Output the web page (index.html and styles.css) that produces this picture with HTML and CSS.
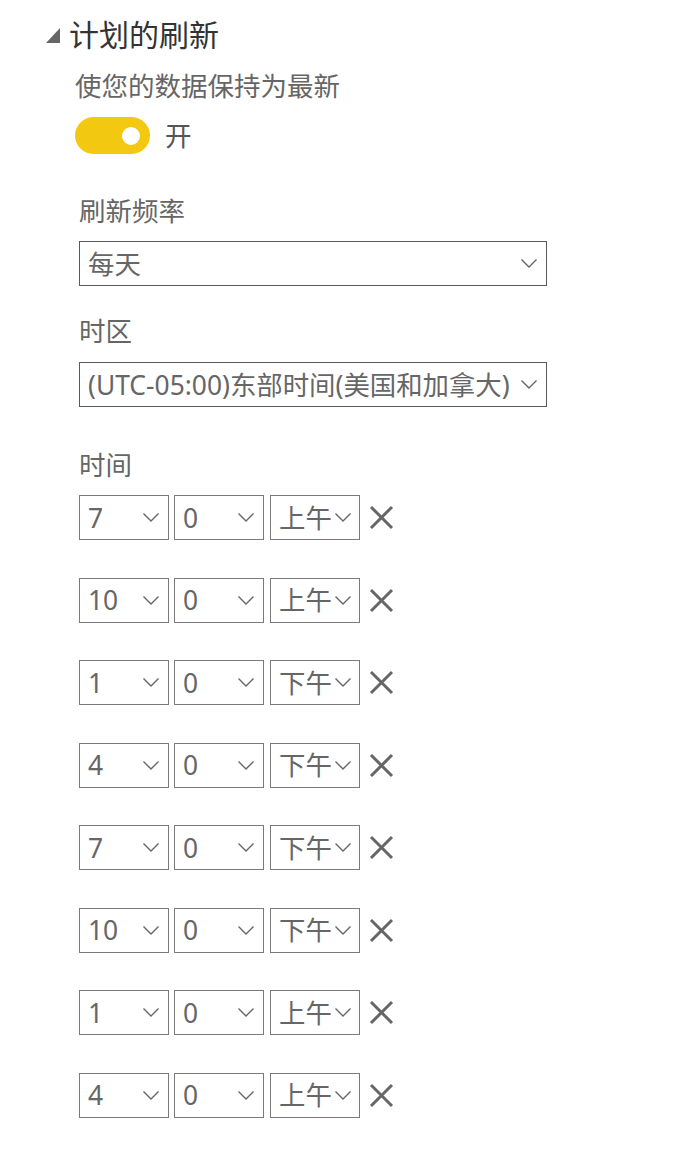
FILE: index.html
```html
<!DOCTYPE html>
<html lang="zh-CN">
<head>
<meta charset="utf-8">
<link rel="stylesheet" href="styles.css">
</head>
<body>
<div class="panel">
  <div class="section-head">
    <svg class="caret" width="15" height="15" viewBox="0 0 15 15"><polygon points="14,0 14,15 0,15" fill="#666"/></svg>
    <h2 class="section-title">计划的刷新</h2>
  </div>
  <div class="section-body">
    <p class="desc">使您的数据保持为最新</p>
    <div class="toggle-row">
      <span class="toggle"><span class="knob"></span></span>
      <span class="toggle-label">开</span>
    </div>

    <div class="field field-freq">
      <div class="label">刷新频率</div>
      <div class="select wide"><span class="value">每天</span><svg class="chev" viewBox="0 0 16 9"><polyline points="0.5,0.5 8,8 15.5,0.5" fill="none" stroke="#666" stroke-width="1.4"/></svg></div>
    </div>

    <div class="field field-tz">
      <div class="label">时区</div>
      <div class="select wide"><span class="value">(UTC-05:00)东部时间(美国和加拿大)</span><svg class="chev" viewBox="0 0 16 9"><polyline points="0.5,0.5 8,8 15.5,0.5" fill="none" stroke="#666" stroke-width="1.4"/></svg></div>
    </div>

    <div class="field field-time">
      <div class="label">时间</div>
      <div class="times" id="times"></div>
    </div>
  </div>
</div>
<script>
(function () {
  var rows = [["7","上午"],["10","上午"],["1","下午"],["4","下午"],["7","下午"],["10","下午"],["1","上午"],["4","上午"]];
  var chev = '<svg class="chev" viewBox="0 0 16 9"><polyline points="0.5,0.5 8,8 15.5,0.5" fill="none" stroke="#666" stroke-width="1.4"/></svg>';
  var x = '<svg class="remove" viewBox="0 0 25 25"><path d="M2 2 L23 23 M23 2 L2 23" stroke="#666" stroke-width="3" fill="none"/></svg>';
  var html = "";
  rows.forEach(function (r) {
    html += '<div class="time-row">' +
      '<div class="select small hour"><span class="value">' + r[0] + '</span>' + chev + '</div>' +
      '<div class="select small minute"><span class="value">0</span>' + chev + '</div>' +
      '<div class="select small ampm"><span class="value">' + r[1] + '</span>' + chev + '</div>' +
      x + '</div>';
  });
  document.getElementById("times").innerHTML = html;
})();
</script>
</body>
</html>
```

FILE: styles.css
```css
* { box-sizing: border-box; }
html, body { margin: 0; padding: 0; background: #fff; }
body {
  font-family: "Noto Sans", "Noto Sans CJK SC", sans-serif;
  color: #666;
}
.panel { padding: 15px 0 0 46px; }

.section-head {
  display: flex;
  align-items: center;
  height: 40px;
}
.caret { width: 15px; height: 15px; margin-right: 8px; margin-top: 1px; }
.section-title {
  margin: 0;
  font-size: 30px;
  font-weight: 400;
  line-height: 40px;
  color: #333;
}

.section-body { padding-left: 29px; }

.desc {
  margin: 13px 0 0;
  font-size: 26.5px;
  line-height: 36px;
  color: #666;
}

.toggle-row {
  display: flex;
  align-items: center;
  margin-top: 13px;
  height: 37px;
}
.toggle {
  width: 75px;
  height: 37px;
  border-radius: 18.5px;
  background: #f2c811;
  position: relative;
}
.knob {
  position: absolute;
  width: 18px;
  height: 18px;
  border-radius: 50%;
  background: #fff;
  top: 9.5px;
  right: 10px;
}
.toggle-label {
  margin-left: 15px;
  font-size: 26.5px;
  line-height: 36px;
  color: #555;
}

.field { padding-left: 4px; }
.field-freq { margin-top: 39px; }
.field-tz { margin-top: 27px; }
.field-time { margin-top: 40px; }

.label {
  font-size: 26.5px;
  line-height: 36px;
  color: #666;
  margin-bottom: 12px;
}
.field-tz .label { margin-bottom: 13px; }

.select {
  display: flex;
  align-items: center;
  border: 1px solid #666;
  height: 45px;
  padding: 0 9px 0 8px;
  font-size: 26.4px;
  color: #666;
}
.select .value { flex: 1; white-space: nowrap; line-height: 36px; }
.select .chev { width: 16px; height: 9px; flex: none; }
.wide { width: 468px; border-color: #5a5a5a; }

.times { display: flex; flex-direction: column; gap: 37.5px; }
.time-row { display: flex; align-items: center; }
.small { width: 90px; border-color: #7a7a7a; }
.small.minute { margin-left: 5px; }
.small.ampm { margin-left: 6px; padding-right: 8px; }
.small .value { overflow: hidden; }
.remove { width: 25px; height: 25px; margin-left: 9px; }
```
